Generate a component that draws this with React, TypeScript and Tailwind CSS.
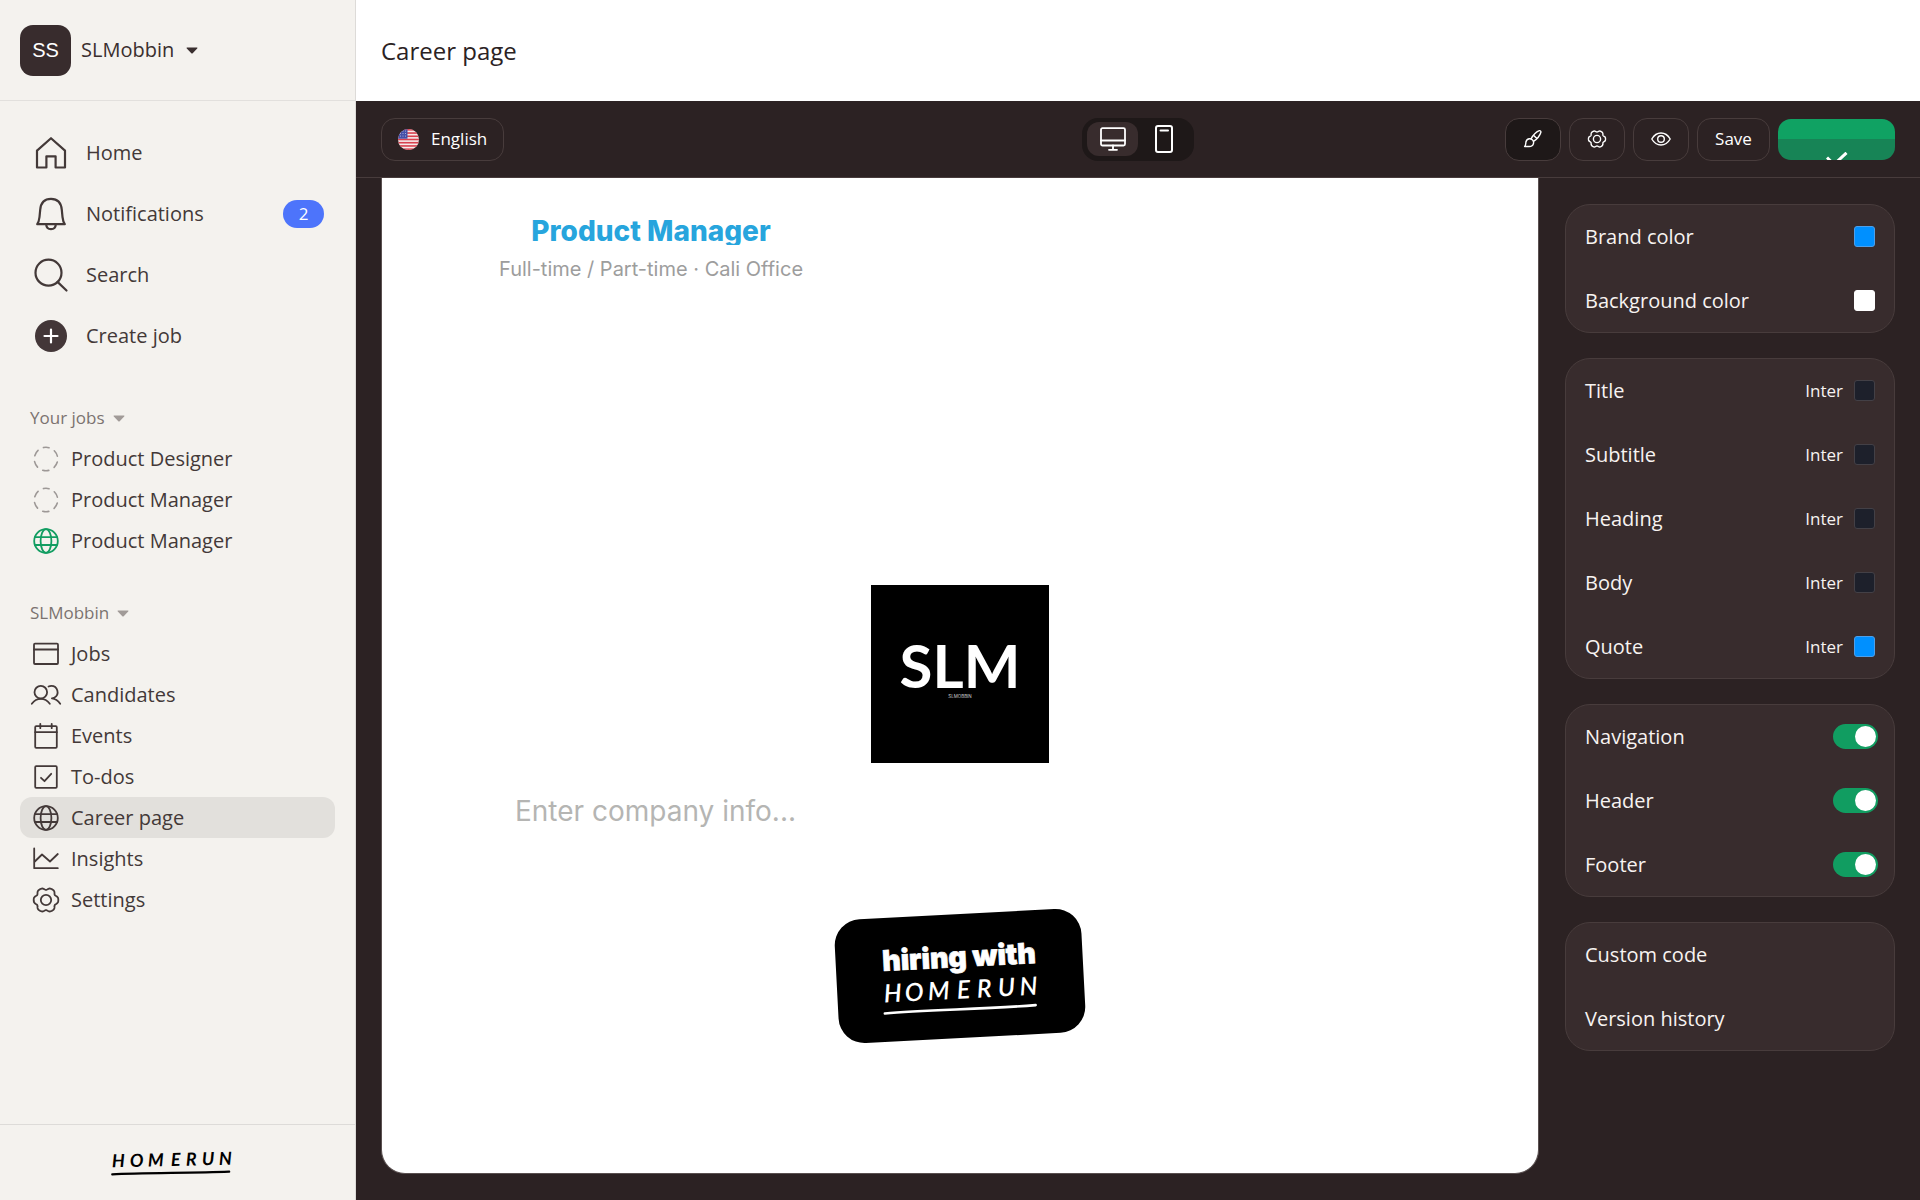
import { useState, type ReactNode } from "react";

const jobs = [
    { title: "Product Designer", live: false },
    { title: "Product Manager", live: false },
    { title: "Product Manager", live: true },
];

const colorRows = [
    { label: "Brand color", swatch: "bg-[#0090ff] border-[#4d9fea]" },
    { label: "Background color", swatch: "bg-white border-white" },
];

const fontRows = [
    { label: "Title", swatch: "bg-[#1d202b] border-[#434046]" },
    { label: "Subtitle", swatch: "bg-[#1d202b] border-[#434046]" },
    { label: "Heading", swatch: "bg-[#1d202b] border-[#434046]" },
    { label: "Body", swatch: "bg-[#1d202b] border-[#434046]" },
    { label: "Quote", swatch: "bg-[#0090ff] border-[#4d9fea]" },
];

// six-lobed outline of the settings wheel, in a 26 unit box
const gearPath =
    Array.from({ length: 120 }, (_, i) => {
        const t = (i / 120) * Math.PI * 2;
        const r = 11.5 + 1.1 * Math.cos(6 * t) - 0.3 * Math.cos(12 * t);
        return `${i ? "L" : "M"}${(13 + r * Math.cos(t)).toFixed(2)} ${(13 + r * Math.sin(t)).toFixed(2)}`;
    }).join("") + "Z";

function Icon({ children, box = 26, className = "size-[26px]", stroke = 1.8 }: { children: ReactNode; box?: number; className?: string; stroke?: number }) {
    return (
        <svg
            viewBox={`0 0 ${box} ${box}`}
            className={`shrink-0 overflow-visible ${className}`}
            fill="none"
            stroke="currentColor"
            strokeWidth={stroke}
            strokeLinecap="round"
            strokeLinejoin="round"
            aria-hidden="true"
        >
            {children}
        </svg>
    );
}

const HomeIcon = () => (
    <Icon box={32} className="size-8" stroke={2.2}>
        <path d="M2 30.5V13.6L16 1.2l14 12.4v16.9h-9.4V19.3h-9.2v11.2z" />
    </Icon>
);

const BellIcon = () => (
    <Icon box={32} className="size-8" stroke={2.2}>
        <path d="M2.2 26.2h27.6c-1.5-1.9-2-4.6-2.3-7.2l-.7-7.2C26.2 4.600 22.2.8 16 .8S5.8 4.6 5.2 11.8L4.5 19c-.3 2.6-.8 5.3-2.3 7.2z" />
        <path d="M11.2 26.5c.2 3 2.1 4.7 4.8 4.7s4.6-1.7 4.8-4.7" />
    </Icon>
);

const SearchIcon = () => (
    <Icon box={32} className="size-8" stroke={2.2}>
        <circle cx="13.5" cy="13.7" r="13" />
        <path d="M22.5 22.9 31.5 31.5" />
    </Icon>
);

const PlusIcon = () => (
    <Icon box={32} className="size-8" stroke={2.2}>
        <circle cx="16" cy="16" r="16" fill="#433738" stroke="none" />
        <path d="M16 9.5v13M9.5 16h13" stroke="#fff" />
    </Icon>
);

const DraftIcon = () => (
    <Icon stroke={1.6}>
        <circle cx="13" cy="13" r="11.7" strokeDasharray="6.2 6.052" strokeDashoffset="3.1" transform="rotate(-90 13 13)" />
    </Icon>
);

const GlobeIcon = () => (
    <Icon>
        <circle cx="13" cy="13" r="11.8" />
        <ellipse cx="13" cy="13" rx="5.4" ry="11.8" />
        <path d="M2 9.2h22M2 17h22" />
    </Icon>
);

const JobsIcon = () => (
    <Icon>
        <rect x="1" y="2.7" width="24" height="20.3" rx="1" />
        <path d="M1 8.5h24" />
    </Icon>
);

const CandidatesIcon = () => (
    <Icon>
        <circle cx="7.8" cy="10.2" r="6.3" />
        <path d="M-1.2 21.7C1 18.8 4.2 16.9 7.8 16.9s6.8 1.9 9 4.8" />
        <path d="M15.5 4.5c1-.4 1.900-.6 2.800-.6a6.3 6.3 0 0 1 3.2 11.7c-.8.4-1.6.7-2.6.8 3 .4 6.2 2.3 8.3 5.3" />
    </Icon>
);

const EventsIcon = () => (
    <Icon>
        <rect x="2.2" y="3.2" width="21.6" height="21.6" rx="1" />
        <path d="M2.2 9.2h21.6M7.3.8v4.4M18.7.8v4.4" />
    </Icon>
);

const TodosIcon = () => (
    <Icon>
        <rect x="2.2" y="2.2" width="21.6" height="21.6" rx="1" />
        <path d="m8 13.8 3.5 3.4L18.2 9.8" />
    </Icon>
);

const InsightsIcon = () => (
    <Icon>
        <path d="M1.2 2.5V22.2h23.6M1.8 15.5 9 8.5l8 7L24.8 8" />
    </Icon>
);

const GearIcon = ({ className = "size-[26px]", stroke = 1.8 }) => (
    <Icon className={className} stroke={stroke}>
        <path d={gearPath} />
        <circle cx="13" cy="13" r="5.2" />
    </Icon>
);

const pages = [
    { label: "Jobs", icon: <JobsIcon /> },
    { label: "Candidates", icon: <CandidatesIcon /> },
    { label: "Events", icon: <EventsIcon /> },
    { label: "To-dos", icon: <TodosIcon /> },
    { label: "Career page", icon: <GlobeIcon />, active: true },
    { label: "Insights", icon: <InsightsIcon /> },
    { label: "Settings", icon: <GearIcon /> },
];

function Caret() {
    return (
        <svg viewBox="0 0 12 7" className="h-[7px] w-3" fill="currentColor" aria-hidden="true">
            <path d="M1.2.5h9.6c.6 0 .8.6.4 1L6.7 6.2c-.4.4-1 .4-1.4 0L.8 1.5C.4 1.1.6.5 1.2.5z" />
        </svg>
    );
}

function Flag() {
    return (
        <svg viewBox="0 0 21 21" className="size-[21px]" aria-hidden="true">
            <clipPath id="flag-round">
                <circle cx="10.5" cy="10.5" r="10.5" />
            </clipPath>
            <g clipPath="url(#flag-round)">
                <rect width="21" height="21" fill="#f6eaea" />
                {[0, 2, 4, 6, 8, 10, 12].map((n) => (
                    <rect key={n} y={n * 1.615} width="21" height="1.615" fill="#d8414f" />
                ))}
                <rect width="9.5" height="9.7" fill="#4450a8" />
                <g fill="#c5c9e6">
                    {[2, 4.5, 7].map((y) =>
                        [2.5, 5, 7.5].map((x) => <circle key={`${x}-${y}`} cx={x} cy={y} r=".5" />),
                    )}
                </g>
            </g>
        </svg>
    );
}

function HomerunLogo() {
    return (
        <svg viewBox="0 0 126 30" className="h-[30px] w-[126px] overflow-visible" role="img" aria-label="Homerun">
            <g transform="rotate(-1.3 63 15)">
                <text x="3 21 39 62 77 93 110" y="18" fontFamily="Lato, sans-serif" fontStyle="italic" fontWeight="700" fontSize="18" fill="#000">
                    HOMERUN
                </text>
                <path d="M3 25 C30 23.8 80 25.6 120 25" stroke="#000" strokeWidth="2.2" strokeLinecap="round" fill="none" />
            </g>
        </svg>
    );
}

function HiringBadge() {
    return (
        <svg viewBox="0 0 252 136" className="h-[136px] w-[252px]" role="img" aria-label="hiring with Homerun">
            <g transform="rotate(-3 126 68)">
                <rect x="2.5" y="6" width="247" height="124" rx="26" fill="#000" />
                <text x="126" y="59" textAnchor="middle" fontFamily="Inter, sans-serif" fontWeight="900" fontSize="28.5" fill="#fff" stroke="#fff" strokeWidth=".7">
                    hiring with
                </text>
                <text x="49 70 93 122 142 163 185" y="90.5" fontFamily="Lato, sans-serif" fontStyle="italic" fontWeight="600" fontSize="25" fill="#fff">
                    HOMERUN
                </text>
                <path d="M49 101.5C90 100 150 102.500 200 101" stroke="#fff" strokeWidth="2.6" strokeLinecap="round" fill="none" />
            </g>
        </svg>
    );
}

function CompanyLogo() {
    return (
        <svg viewBox="0 0 178 178" className="size-[178px]" role="img" aria-label="SLMobbin">
            <rect width="178" height="178" fill="#000" />
            <text x="89" y="103" textAnchor="middle" fontFamily="Lato, sans-serif" fontWeight="700" fontSize="60" fill="#fff">
                SLM
            </text>
            <text x="89" y="113" textAnchor="middle" fontFamily="Inter, sans-serif" fontSize="4.500" fill="#ccc">
                SLMOBBIN
            </text>
        </svg>
    );
}

function Panel({ children }: { children: ReactNode }) {
    return <div className="flex flex-col gap-px rounded-[25px] border border-[#483c3c] bg-[#382c2d]">{children}</div>;
}

function SwitchRow({ label }: { label: string }) {
    const [on, setOn] = useState(true);
    return (
        <label className="flex h-[63px] cursor-pointer items-center justify-between pr-4 pl-[19px]">
            {label}
            <input
                type="checkbox"
                checked={on}
                onChange={() => setOn(!on)}
                className="h-[25px] w-[45px] cursor-pointer appearance-none rounded-full bg-[#5c5050] p-[2px] before:block before:size-[21px] before:rounded-full before:bg-white checked:bg-[#119d61] checked:before:ml-auto"
            />
        </label>
    );
}

function GroupLabel({ children }: { children: ReactNode }) {
    return (
        <button className="mb-2 ml-[30px] flex items-center gap-2 text-[17px] leading-6 text-[#7b7370]">
            {children}
            <span className="text-[#a19b98]">
                <Caret />
            </span>
        </button>
    );
}

function Sidebar() {
    return (
        <aside className="flex w-[356px] shrink-0 flex-col border-r border-[#dddbd8] bg-[#f4f2ee] text-xl text-[#433938]">
            <div className="flex h-[101px] items-center border-b border-[#e2e0dd] px-5">
                <button className="flex items-center gap-3 text-[#3a2f2f]">
                    <span className="flex items-center gap-[10px]">
                        <span className="flex size-[51px] items-center justify-center rounded-[13px] bg-[#382c2d] font-['Liberation_Sans',sans-serif] text-white">
                            SS
                        </span>
                        SLMobbin
                    </span>
                    <Caret />
                </button>
            </div>

            <nav className="pt-[21px] pb-10">
                {[
                    { label: "Home", icon: <HomeIcon /> },
                    { label: "Notifications", icon: <BellIcon />, count: 2 },
                    { label: "Search", icon: <SearchIcon /> },
                    { label: "Create job", icon: <PlusIcon /> },
                ].map((item) => (
                    <a key={item.label} href="#" className="flex h-[61px] items-center gap-[19px] pr-[31px] pl-[35px]">
                        {item.icon}
                        {item.label}
                        {item.count && (
                            <span className="ml-auto flex h-7 w-[41px] items-center justify-center rounded-full bg-[#4d74fb] text-[17px] text-white">
                                {item.count}
                            </span>
                        )}
                    </a>
                ))}
            </nav>

            <GroupLabel>Your jobs</GroupLabel>
            <nav className="mb-10 px-5">
                {jobs.map((job, i) => (
                    <a key={i} href="#" className="flex h-[41px] items-center gap-3 px-[13px]">
                        <span className={job.live ? "text-[#119d61]" : "text-[#9d9896]"}>{job.live ? <GlobeIcon /> : <DraftIcon />}</span>
                        {job.title}
                    </a>
                ))}
            </nav>

            <GroupLabel>SLMobbin</GroupLabel>
            <nav className="px-5">
                {pages.map((page) => (
                    <a
                        key={page.label}
                        href="#"
                        className={`flex h-[41px] items-center gap-3 rounded-xl px-[13px] ${page.active ? "bg-[#e2e0dc]" : ""}`}
                    >
                        {page.icon}
                        {page.label}
                    </a>
                ))}
            </nav>

            <div className="mt-auto flex h-[76px] items-center justify-center border-t border-[#dddbd8] pr-3">
                <HomerunLogo />
            </div>
        </aside>
    );
}

function Toolbar() {
    const [device, setDevice] = useState("desktop");
    const deviceClass = (name: string) =>
        `flex h-[34px] w-[51px] items-center justify-center rounded-xl ${device === name ? "bg-[#382c2d]" : ""}`;
    const toolClass = "flex h-[43px] w-14 items-center justify-center rounded-[14px] border border-[#483c3c]";

    return (
        <div className="grid h-[77px] grid-cols-[1fr_auto_1fr] items-center border-b border-[#483c3c] px-[25px] text-[17px] text-white">
            <button className="flex h-[43px] items-center gap-3 justify-self-start rounded-[14px] border border-[#483c3c] px-4">
                <Flag />
                English
            </button>

            <div className="flex h-[43px] items-center rounded-2xl bg-[#1e1818] px-[5px]">
                <button aria-label="Desktop" className={deviceClass("desktop")} onClick={() => setDevice("desktop")}>
                    <Icon className="size-[26px]" stroke={1.8}>
                        <rect x="1" y="2.2" width="24" height="17.3" rx="1.5" />
                        <path d="M1 14.5h24M13 19.500v4.300M9 23.800h8" />
                    </Icon>
                </button>
                <button aria-label="Mobile" className={deviceClass("mobile")} onClick={() => setDevice("mobile")}>
                    <Icon className="size-[26px]" stroke={2}>
                        <rect x="5" y="0" width="16" height="26" rx="2" />
                        <path d="M9.5 4.5h7.5" />
                    </Icon>
                </button>
            </div>

            <div className="flex items-center gap-2 justify-self-end">
                <button aria-label="Design" className={`${toolClass} bg-[#1e1818]`}>
                    <Icon box={18} className="size-[18px]" stroke={1.4}>
                        <path d="M.6 16.500c1.500-1.200 1-3.200 1.400-4.700.5-2.100 2.400-3.300 4.300-3 2.200.4 3.700 2.400 3.200 4.500-.5 2.300-2.400 3.200-4.400 3.200z" />
                        <path d="M7 8.900c2-3.700 5.200-7 8.200-8.200.9-.4 2 .5 1.700 1.500-1 3.300-3.600 6.700-7.400 9.200M9.800 5.500l3 3" />
                    </Icon>
                </button>
                <button aria-label="Settings" className={toolClass}>
                    <GearIcon className="size-[18px]" stroke={2} />
                </button>
                <button aria-label="Preview" className={toolClass}>
                    <Icon box={20} className="size-5" stroke={1.4}>
                        <path d="M.8 10C3 6.200 6.200 4 10 4s7 2.200 9.200 6C17 13.800 13.800 16 10 16S3 13.800.8 10z" />
                        <circle cx="10" cy="10" r="3.3" />
                    </Icon>
                </button>
                <button className="h-[43px] w-[73px] rounded-[14px] border border-[#483c3c]">Save</button>
                <button
                    aria-label="Published"
                    className="flex h-[41px] w-[117px] items-end justify-center overflow-hidden rounded-[13px] bg-linear-to-b from-[#10a263] from-50% to-[#178456] to-50%"
                >
                    <svg viewBox="0 0 22 8" className="h-2 w-[22px]" fill="none" stroke="#fff" strokeWidth="3" aria-hidden="true">
                        <path d="M1 5.500 8 12.500 20.500.8" />
                    </svg>
                </button>
            </div>
        </div>
    );
}

function Canvas() {
    return (
        <section className="flex flex-1 flex-col rounded-b-[24px] border-x border-b border-[#5a5050] bg-white font-['Inter',sans-serif]">
            <div className="ml-[117px] flex w-fit flex-col items-center pt-10">
                <h2 className="h-[27px] overflow-hidden text-[28px] leading-[27px] font-extrabold text-[#27a5dd]">Product Manager</h2>
                <p className="mt-2 text-xl leading-8 text-[#9d9d9d]">Full-time / Part-time · Cali Office</p>
            </div>
            <div className="mt-[300px] flex justify-center">
                <CompanyLogo />
            </div>
            <input
                aria-label="Company info"
                placeholder="Enter company info..."
                className="mt-7 ml-[133px] h-10 w-[500px] text-[28px] outline-none placeholder:text-[#b5b5b3]"
            />
            <div className="mt-[77px] flex justify-center">
                <HiringBadge />
            </div>
        </section>
    );
}

export default function App() {
    return (
        <div className="flex min-h-screen bg-[#2c2223] font-['Open_Sans',sans-serif]">
            <Sidebar />
            <main className="flex min-w-0 flex-1 flex-col">
                <header className="flex h-[101px] items-center bg-white px-[25px]">
                    <h1 className="text-2xl text-[#2b2223]">Career page</h1>
                </header>
                <Toolbar />
                <div className="flex flex-1 gap-[26px] px-[25px] pb-[26px]">
                    <Canvas />
                    <aside className="flex w-[330px] shrink-0 flex-col gap-[25px] pt-[26px] text-xl text-[#f7f3f1]">
                        <Panel>
                            {colorRows.map((row) => (
                                <div key={row.label} className="flex h-[63px] items-center justify-between px-[19px]">
                                    {row.label}
                                    <button aria-label={row.label} className={`size-[21px] rounded-[3px] border ${row.swatch}`} />
                                </div>
                            ))}
                        </Panel>
                        <Panel>
                            {fontRows.map((row) => (
                                <div key={row.label} className="flex h-[63px] items-center px-[19px]">
                                    {row.label}
                                    <button className="mr-[11px] ml-auto text-[17px]">Inter</button>
                                    <button aria-label={`${row.label} color`} className={`size-[21px] rounded-[3px] border ${row.swatch}`} />
                                </div>
                            ))}
                        </Panel>
                        <Panel>
                            <SwitchRow label="Navigation" />
                            <SwitchRow label="Header" />
                            <SwitchRow label="Footer" />
                        </Panel>
                        <Panel>
                            <button className="h-[63px] px-[19px] text-left">Custom code</button>
                            <button className="h-[63px] px-[19px] text-left">Version history</button>
                        </Panel>
                    </aside>
                </div>
            </main>
        </div>
    );
}
